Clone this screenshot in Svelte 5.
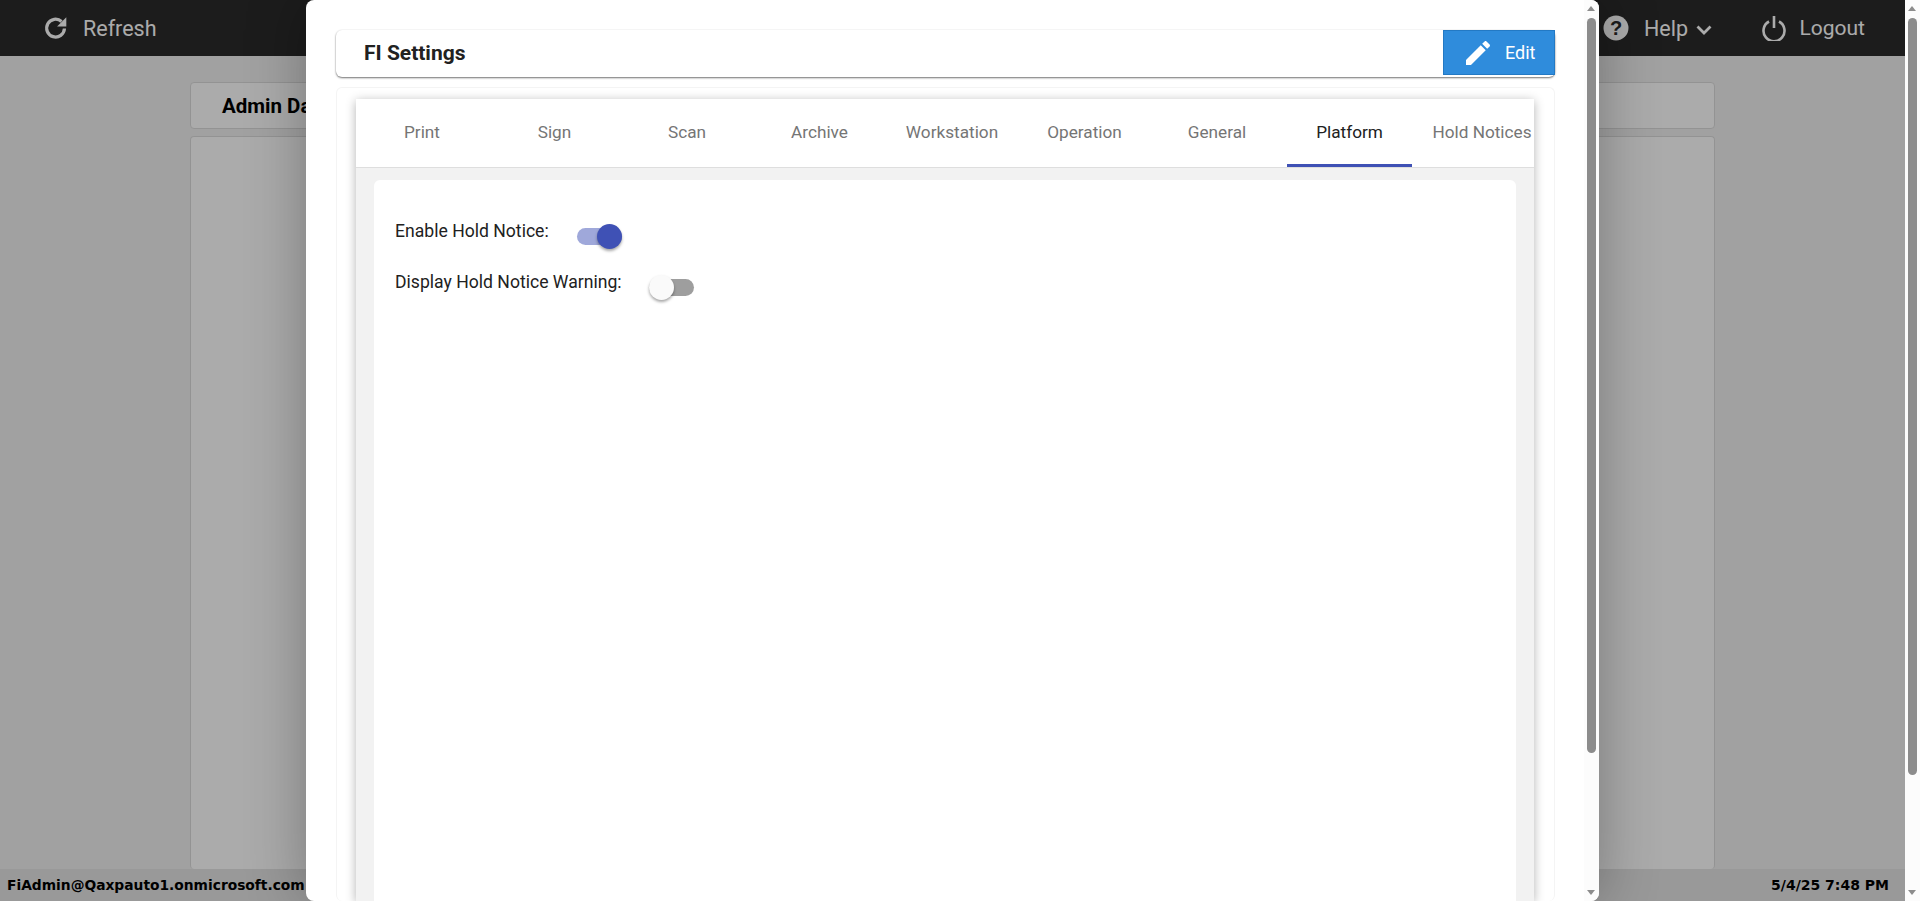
<script>
  const tabs = ['Print', 'Sign', 'Scan', 'Archive', 'Workstation', 'Operation', 'General', 'Platform', 'Hold Notices'];
  let active = $state('Platform');
  let holdNotice = $state(true);
  let holdWarning = $state(false);
</script>

<div class="shell">
  <div class="page">
    <header class="topbar">
      <button class="nav-btn refresh">
        <svg width="26" height="26" viewBox="0 0 24 24" fill="none">
          <path d="M19.8 12.500a8.200 8.200 0 1 1-2.700-6.500" stroke="currentColor" stroke-width="3"/>
          <path d="M21.500 2v8.500h-8.500z" fill="currentColor"/>
        </svg>
        <span>Refresh</span>
      </button>
      <div class="nav-right">
        <button class="nav-btn help">
          <svg width="26" height="26" viewBox="0 0 26 26">
            <circle cx="13" cy="13" r="12.500" fill="currentColor"/>
            <text x="13" y="20" text-anchor="middle" class="q">?</text>
          </svg>
          <span>Help</span>
          <svg class="chev" width="16" height="10" viewBox="0 0 16 10" fill="none">
            <path d="M1.500 1.500 8 8l6.500-6.500" stroke="currentColor" stroke-width="2.800"/>
          </svg>
        </button>
        <button class="nav-btn logout">
          <svg width="24" height="26" viewBox="0 0 24 26" fill="none">
            <path d="M7 6.500a10.500 10.500 0 1 0 10 0M12 1v12" stroke="currentColor" stroke-width="2.600"/>
          </svg>
          <span>Logout</span>
        </button>
      </div>
    </header>

    <main class="main">
      <div class="panel title-panel"><h2>Admin Dashboard</h2></div>
      <div class="panel body-panel"></div>
    </main>

    <footer class="status">
      <span>FiAdmin@Qaxpauto1.onmicrosoft.com</span>
      <span class="stamp">5/4/25 7:48 PM</span>
    </footer>

    <div class="backdrop"></div>

    <div class="modal">
      <div class="modal-body">
        <div class="settings-head">
          <h3>FI Settings</h3>
          <button class="edit-btn">
            <svg width="32" height="32" viewBox="0 0 24 24" fill="currentColor">
              <path d="M3 17.250V21h3.750L17.810 9.940l-3.750-3.750L3 17.250zM20.710 7.040c.39-.39.39-1.020 0-1.410l-2.340-2.340c-.39-.39-1.020-.39-1.410 0l-1.830 1.830 3.750 3.750 1.830-1.830z"/>
            </svg>
            <span>Edit</span>
          </button>
        </div>

        <div class="settings-card">
          <div class="tab-card">
            <div class="tabs">
              {#each tabs as tab}
                <button class="tab" class:active={active === tab} onclick={() => (active = tab)}>{tab}</button>
              {/each}
            </div>
            <div class="tab-content">
              <div class="form-card">
                <div class="row">
                  <span class="lbl">Enable Hold Notice:</span>
                  <button class="switch" class:on={holdNotice} aria-label="Enable Hold Notice" onclick={() => (holdNotice = !holdNotice)}><i></i></button>
                </div>
                <div class="row">
                  <span class="lbl">Display Hold Notice Warning:</span>
                  <button class="switch" class:on={holdWarning} aria-label="Display Hold Notice Warning" onclick={() => (holdWarning = !holdWarning)}><i></i></button>
                </div>
              </div>
            </div>
          </div>
        </div>
      </div>
      <div class="scrollbar modal-scroll">
        <b class="up"></b>
        <div class="thumb"></div>
        <b class="down"></b>
      </div>
    </div>
  </div>

  <div class="scrollbar page-scroll">
    <b class="up"></b>
    <div class="thumb"></div>
    <b class="down"></b>
  </div>
</div>

<style>
  :global(body) { margin: 0; overflow: hidden; }
  :global(*) { box-sizing: border-box; }

  .shell { display: flex; height: 901px; overflow: hidden; font-family: Roboto, "Liberation Sans", sans-serif; }
  .page { position: relative; flex: 1; min-width: 0; display: flex; flex-direction: column; background: #f0f0f0; overflow: hidden; }

  button { border: 0; background: none; padding: 0; font: inherit; color: inherit; cursor: pointer; }

  /* TOP BAR */
  .topbar { height: 56px; flex: none; background: #2a2a2a; color: #fff; display: flex; align-items: center; justify-content: space-between; padding: 0 40px 0 43px; }
  .nav-btn { display: flex; align-items: center; font-size: 21px; }
  .refresh { gap: 14px; }
  .refresh span { font-size: 21.500px; }
  .nav-right { display: flex; align-items: center; gap: 50px; }
  .help span { margin-left: 15px; font-size: 21.500px; }
  .chev { margin-left: 8px; margin-top: 3px; }
  .logout { gap: 13.500px; }
  .q { font: bold 20px "Liberation Sans", sans-serif; fill: #2a2a2a; }

  /* PAGE */
  .main { flex: 1; min-height: 0; padding: 26px 190px 0 190px; display: flex; flex-direction: column; gap: 7px; }
  .panel { background: #fff; border: 1px solid #dcdcdc; border-radius: 4px; }
  .title-panel { height: 47px; padding: 0 31px; display: flex; align-items: center; }
  .title-panel h2 { margin: 0; font-size: 20.500px; font-weight: 700; color: #000; }
  .body-panel { flex: 1; border-bottom: 0; }
  .status { height: 32px; flex: none; background: #e5e5e5; display: flex; align-items: center; justify-content: space-between; padding: 0 16px 0 7px; font: bold 13.800px "DejaVu Sans", sans-serif; color: #000; }
  .stamp { font-size: 14px; }

  .backdrop { position: absolute; inset: 0; background: rgba(0, 0, 0, 0.33); }

  /* MODAL */
  .modal { position: absolute; left: 306px; top: 0; width: 1293px; height: 901px; background: #fff; border-radius: 8px; box-shadow: 0 0 60px rgba(0, 0, 0, 0.3); display: flex; overflow: hidden; }
  .modal-body { flex: 1; min-width: 0; padding: 30px 29px 0 30px; display: flex; flex-direction: column; gap: 10px; }

  .settings-head { height: 47px; flex: none; display: flex; justify-content: space-between; align-items: flex-start; padding-left: 28px; border-radius: 6px; box-shadow: 0 1px 2px rgba(0, 0, 0, 0.55), 0 0 2px rgba(0, 0, 0, 0.06); }
  .settings-head h3 { margin: 12px 0 0; font-size: 21px; line-height: 23px; font-weight: 700; color: #212121; }
  .edit-btn { width: 112px; height: 45px; background: #2f8cdc; border: 1px solid #2379c4; color: #fff; font-size: 18px; display: flex; align-items: center; gap: 11px; padding-left: 18px; }

  .settings-card { flex: 1; min-height: 0; padding: 11px 20px 0 19px; border: 1px solid #f4f4f4; border-bottom: 0; border-radius: 6px; }
  .tab-card { height: 100%; background: #fff; display: flex; flex-direction: column; box-shadow: 0 2px 10px rgba(0, 0, 0, 0.3); }

  .tabs { height: 69px; flex: none; display: flex; gap: 7.500px; padding-left: 3.500px; overflow: hidden; border-bottom: 1px solid #dedede; }
  .tab { flex: 0 0 125px; height: 68px; font-size: 17.200px; color: #757575; text-align: center; white-space: nowrap; border-bottom: 3px solid transparent; }
  .tab.active { color: #212121; border-bottom-color: #3f51b5; }

  .tab-content { flex: 1; min-height: 0; background: #f2f2f2; padding: 12px 18px 0; }
  .form-card { height: 100%; background: #fff; border-radius: 6px 6px 0 0; padding: 38px 21px 0; }
  .row { display: flex; align-items: flex-start; height: 51px; }
  .lbl { font-size: 17.600px; line-height: 27px; color: #212121; margin-right: 27px; }
  .row:first-child .lbl { margin-right: 28.500px; }

  /* SWITCH */
  .switch { position: relative; width: 45px; height: 25px; margin-top: 6px; }
  .switch::before { content: ''; position: absolute; left: 0; right: 0; top: 4px; height: 17px; border-radius: 9px; background: #9e9e9e; }
  .switch i { position: absolute; left: 0; top: 0; width: 25px; height: 25px; border-radius: 50%; background: #fafafa; box-shadow: 0 2px 3px rgba(0, 0, 0, 0.35); }
  .switch.on::before { background: #9fa8da; }
  .switch.on i { left: 20px; background: #3f51b5; }

  /* SCROLLBARS */
  .scrollbar { position: relative; flex: 0 0 15px; background: #fcfcfc; }
  .thumb { position: absolute; left: 3px; right: 3px; top: 18px; border-radius: 5px; background: #8c8c8c; }
  .modal-scroll .thumb { height: 735px; }
  .page-scroll .thumb { height: 757px; }
  .up, .down { position: absolute; left: 3px; width: 0; height: 0; border-left: 4.500px solid transparent; border-right: 4.500px solid transparent; }
  .up { top: 6px; border-bottom: 5px solid #8c8c8c; }
  .down { bottom: 6px; border-top: 5px solid #8c8c8c; }
</style>
